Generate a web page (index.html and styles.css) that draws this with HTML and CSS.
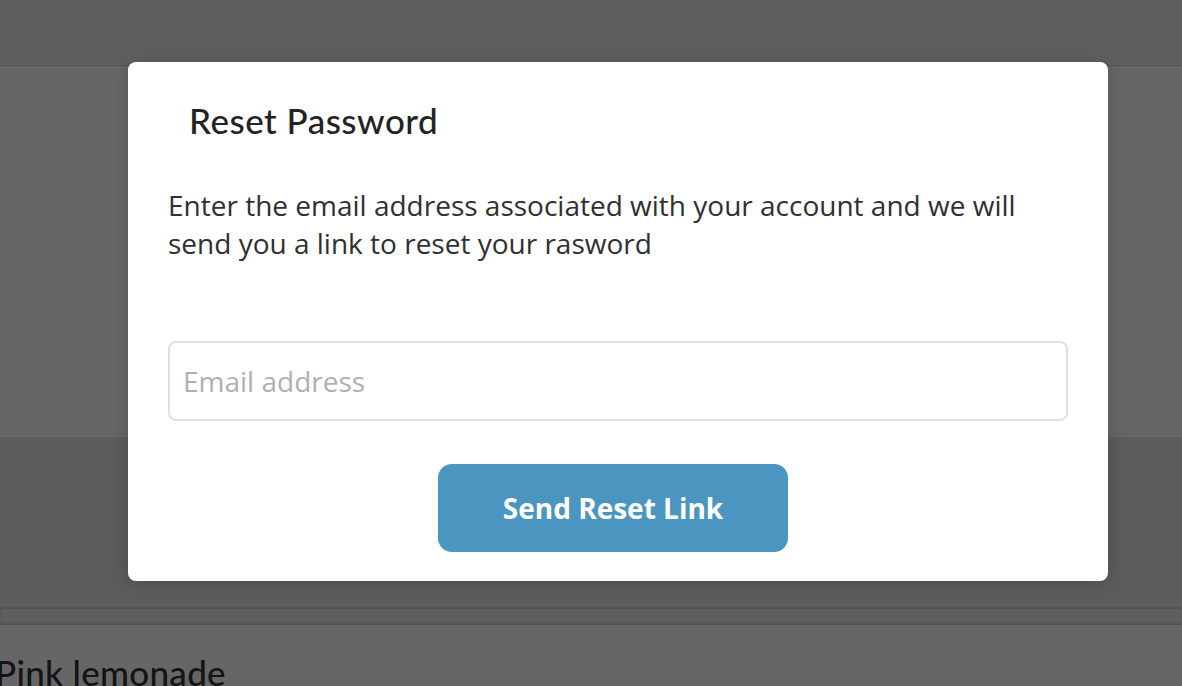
FILE: index.html
```html
<!DOCTYPE html>
<html lang="en">
<head>
<meta charset="utf-8">
<title>Reset Password</title>
<link rel="stylesheet" href="styles.css">
</head>
<body>
<div class="page">
  <header class="topbar"></header>
  <section class="hero"></section>
  <section class="band"></section>
  <div class="divider"></div>
  <section class="product">
    <h2 class="product-title">Pink lemonade</h2>
  </section>
</div>

<div class="modal" role="dialog" aria-labelledby="reset-title">
  <h1 class="modal-title" id="reset-title">Reset Password</h1>
  <p class="modal-text">Enter the email address associated with your account and we will send you a link to reset your rasword</p>
  <input class="email-input" type="email" placeholder="Email address">
  <div class="actions">
    <button class="send-btn" type="button">Send Reset Link</button>
  </div>
</div>
</body>
</html>
```

FILE: styles.css
```css
* { box-sizing: border-box; }
html, body { margin: 0; padding: 0; }
body {
  width: 1182px;
  height: 686px;
  overflow: hidden;
  background: #666666;
  font-family: "Open Sans", "Noto Sans", sans-serif;
}

.page { display: flex; flex-direction: column; }
.topbar {
  height: 66px;
  background: #5f5e61;
  border-bottom: 1px solid #555457;
  box-shadow: 0 2px 3px rgba(0,0,0,0.25);
}
.hero { height: 371px; background: #666666; }
.band { height: 170px; background: #5c5b5e; }
.divider { height: 18px; background: #5e5d60; border-top: 2px solid #545356; box-shadow: inset 0 -2px 3px rgba(0,0,0,0.12); }
.product { background: #666666; padding-top: 26px; }
.product-title {
  margin: 0 0 0 -5px;
  font-family: "Lato", sans-serif;
  font-weight: 500;
  font-size: 35px;
  color: #141414;
  letter-spacing: 0.3px;
  line-height: 42px;
}

.modal {
  position: absolute;
  left: 128px;
  top: 62px;
  width: 980px;
  height: 519px;
  background: #ffffff;
  border-radius: 8px;
  padding: 0 40px;
  display: flex;
  flex-direction: column;
  box-shadow: 0 2px 18px rgba(0,0,0,0.18);
}
.modal-title {
  margin: 37px 0 0 21px;
  font-family: "Lato", sans-serif;
  font-weight: 500;
  font-size: 35px;
  line-height: 42px;
  color: #232323;
  letter-spacing: 0.5px;
}
.modal-text {
  margin: 45px 0 0 0;
  font-size: 28px;
  line-height: 38px;
  color: #303030;
  width: 880px;
}
.email-input {
  margin-top: 79px;
  width: 900px;
  height: 80px;
  border: 2px solid #e0e0e0;
  border-radius: 8px;
  padding: 0 13px;
  font-family: "Open Sans", sans-serif;
  font-size: 28px;
  color: #333;
  outline: none;
}
.email-input::placeholder { color: #b0b0b0; }
.actions { display: flex; justify-content: center; margin-top: 43px; padding-right: 10px; }
.send-btn {
  width: 350px;
  height: 88px;
  border: none;
  border-radius: 14px;
  background: #4b96c0;
  color: #ffffff;
  font-family: "Open Sans", sans-serif;
  font-weight: 700;
  font-size: 28px;
  cursor: pointer;
}
```
